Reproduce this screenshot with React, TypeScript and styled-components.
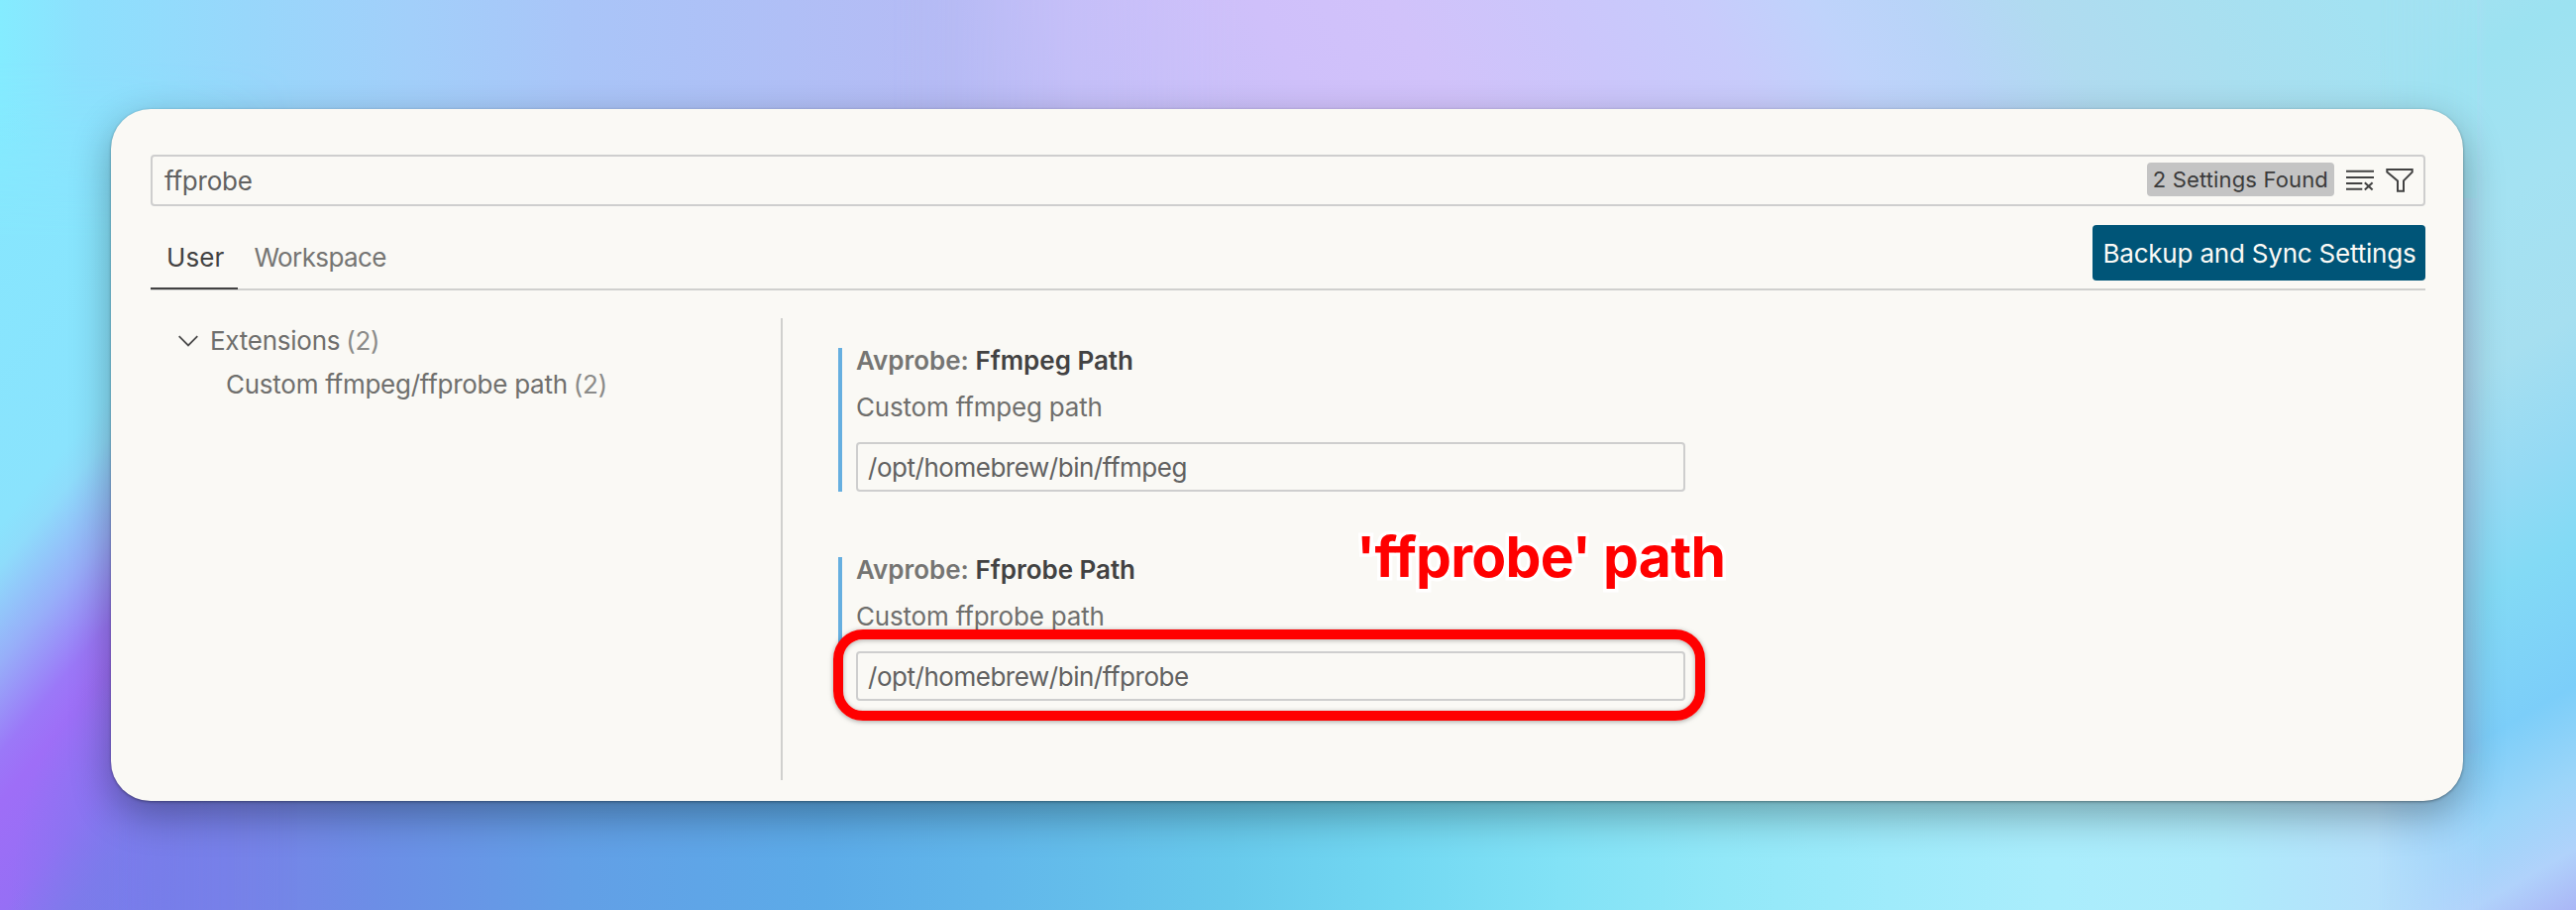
import React from "react";
import styled, { createGlobalStyle } from "styled-components";

const GlobalStyle = createGlobalStyle`
  *, *::before, *::after { box-sizing: border-box; }
  body { margin: 0; }
`;

const Desktop = styled.div`
  position: relative;
  display: flex;
  align-items: flex-start;
  width: 2600px;
  height: 918px;
  padding: 110px 114px 110px 112px;
  overflow: hidden;
  font-family: Inter, "Liberation Sans", sans-serif;
  font-size: 26px;
  line-height: 32px;
  background: linear-gradient(90deg, #84ecff 0, #8de0fd 83px, #98d7fb 249px, #a2cffa 414px,
    #a9c5f8 580px, #b0bff6 796px, #b6bbf5 962px, #c4bff8 1078px, #cfc0fa 1293px, #d1c2fa 1426px);
`;

const Wallpaper = styled.div`
  position: absolute;
  inset: 0;
`;

const TopGlow = styled.div`
  position: absolute;
  top: 0;
  right: 100px;
  width: 1600px;
  height: 200px;
  background: linear-gradient(60deg, #b8bbf5 8%, #c4bff8 15%, #cfc0fa 28%, #d1c2fa 36%, #cbc6fb 46%, #c8cbfb 54%,
    #bfd3fb 61%, #b8d4f8 67%, #b0dbf0 74%, #a9dff0 83%, #a3e2f2 93%);
  mask-image: linear-gradient(90deg, transparent 0, #000 350px);
`;

const BottomGlow = styled.div`
  position: absolute;
  bottom: 0;
  left: 0;
  right: 0;
  height: 158px;
  background: linear-gradient(90deg, #9b70f6 0, #7f7de9 166px, #6c8ee6 380px, #629fe6 580px, #5cabe8 830px,
    #61b6ea 995px, #68caec 1243px, #72d8f2 1410px, #82e2f6 1575px, #92e8f8 1741px, #9febfb 1907px,
    #aaedfc 2073px, #aeebfb 2238px, #b5e0fb 2404px, #b8d8fc 2490px, #abb8f6 2600px);
`;

const LeftGlow = styled.div`
  position: absolute;
  top: 0;
  left: 0;
  width: 400px;
  height: 918px;
  background:
    radial-gradient(ellipse 250px 320px at 260px 918px, #737eea 0%, #737eea 30%, rgba(115, 126, 234, 0) 100%),
    linear-gradient(130deg, #84e8fe 0%, #8ae3fd 38%, #8edcfb 41%, #97aef9 48%, #9b78f8 54.5%,
    #9e6ef7 58%, #966ff5 66%, #8478ec 72%, #7c7de9 80%);
  mask-image: linear-gradient(90deg, #000 110px, transparent 300px), linear-gradient(180deg, transparent 60px, #000 240px);
  mask-composite: intersect;
`;

const RightGlow = styled.div`
  position: absolute;
  top: 0;
  right: 0;
  width: 200px;
  height: 918px;
  background: linear-gradient(150deg, #a4e1f1 0%, #9ce2f1 11%, #a4e2f2 26%, #a6dff0 42%, #95daf4 54%, #83daf5 64%,
    #7ccef9 78%, #9cd5f9 87%, #b0d2fb 94%, #aab6f6 100%);
  mask-image: linear-gradient(90deg, transparent 0, #000 110px);
`;

const Card = styled.main`
  position: relative;
  width: 2374px;
  height: 698px;
  padding: 46px 38px 21px 40px;
  border-radius: 40px;
  background: #faf9f5;
  box-shadow: 0 1px 3px rgba(0, 0, 0, 0.35), 0 14px 40px rgba(0, 0, 0, 0.32);
`;

const SearchBar = styled.div`
  display: flex;
  align-items: center;
  height: 52px;
  padding: 0 7px 0 12px;
  border: 2px solid #cecece;
  border-radius: 4px;
  color: #616161;
`;

const Query = styled.span`
  flex: 1;
  padding-top: 1px;
  letter-spacing: -0.2px;
`;

const CountBadge = styled.span`
  height: 34px;
  margin: -2px 11px 0 0;
  padding: 0 6px;
  border-radius: 4px;
  background: #c4c4c4;
  color: #3b3b3b;
  font-size: 22px;
  line-height: 34px;
  letter-spacing: 0.15px;
`;

const ToolIcon = styled.svg`
  display: block;
  flex: none;
  width: 32px;
  height: 32px;
  margin-left: 8px;
  fill: none;
  stroke: #424242;
  stroke-width: 2;

  &:first-of-type { margin-left: 0; }
`;

const TabBar = styled.div`
  display: flex;
  align-items: flex-end;
  height: 85px;
  border-bottom: 2px solid #d0d0ce;
`;

const Tab = styled.div<{ $active?: boolean }>`
  height: 52px;
  margin-bottom: ${(p) => (p.$active ? "-1px" : "0")};
  padding: ${(p) => (p.$active ? "4px 14px 0 16px" : "5px 16px 0")};
  border-bottom: 2px solid ${(p) => (p.$active ? "#424242" : "transparent")};
  color: ${(p) => (p.$active ? "#424242" : "#757573")};
  letter-spacing: ${(p) => (p.$active ? "0.1px" : "-0.6px")};
`;

const SyncButton = styled.button`
  height: 56px;
  width: 336px;
  margin: 0 0 8px auto;
  padding: 1px 0 0 1px;
  border: 0;
  border-radius: 4px;
  background: #005578;
  color: #fbfaf6;
  font: inherit;
  letter-spacing: -0.2px;
  white-space: nowrap;
`;

const Body = styled.div`
  display: flex;
  padding-top: 28px;
`;

const Tree = styled.nav`
  width: 638px;
  height: 466px;
  padding-top: 1px;
  border-right: 2px solid #d0d0ce;
  color: #6f6f6d;
  letter-spacing: -0.26px;
`;

const TreeRow = styled.div<{ $depth: number }>`
  display: flex;
  align-items: center;
  gap: 6px;
  height: 44px;
  padding-left: ${(p) => (p.$depth ? 76 : 28)}px;
  white-space: nowrap;
`;

const Chevron = styled.svg`
  width: 20px;
  height: 12px;
  margin-right: 6px;
  fill: none;
  stroke: #4c4c4c;
  stroke-width: 1.8;
`;

const Count = styled.span`
  color: #8b8b89;
`;

const SettingList = styled.section`
  display: flex;
  flex-direction: column;
  gap: 66px;
  padding: 30px 0 0 56px;
`;

const Setting = styled.article`
  position: relative;
  height: 145px;
  padding-left: 14px;
  border-left: 4px solid #66afe0;
`;

const SettingTitle = styled.h3`
  margin: 0;
  padding-top: 0;
  font-size: 26px;
  font-weight: 600;
  line-height: 25px;
  color: #424242;
  letter-spacing: -0.03px;
`;

const Category = styled.span`
  color: #757573;
`;

const Description = styled.p`
  margin: 19px 0 0;
  line-height: 32px;
  color: #6f6f6d;
  letter-spacing: -0.18px;
`;

const PathInput = styled.div`
  width: 837px;
  height: 50px;
  margin-top: 19px;
  padding-left: 10px;
  border: 2px solid #cecece;
  border-radius: 4px;
  line-height: 47px;
  color: #616161;
  letter-spacing: -0.47px;
`;

const Highlight = styled.div`
  position: absolute;
  left: -9px;
  top: 73px;
  width: 880px;
  height: 92px;
  border: 10px solid #ff0000;
  border-radius: 30px;
  box-shadow: 0 1px 5px rgba(0, 0, 0, 0.35), inset 0 1px 5px rgba(0, 0, 0, 0.3);
`;

const Callout = styled.div`
  position: absolute;
  left: 519px;
  top: -35px;
  font-size: 57px;
  font-weight: 700;
  line-height: 70px;
  letter-spacing: -0.75px;
  white-space: nowrap;
  color: #ff0000;
  -webkit-text-stroke: 7px #ffffff;
  paint-order: stroke fill;
`;

export default function App() {
  return (
    <Desktop>
      <GlobalStyle />
      <Wallpaper>
        <TopGlow />
        <BottomGlow />
        <LeftGlow />
        <RightGlow />
      </Wallpaper>
      <Card>
        <SearchBar>
          <Query>ffprobe</Query>
          <CountBadge>2 Settings Found</CountBadge>
          <ToolIcon viewBox="0 0 32 32">
            <path d="M1 6.7h28M1 13h28M1 19h16.3M1 24.7h16.3M19.8 18.2l7.8 7.4M27.6 18.2l-7.8 7.4" />
          </ToolIcon>
          <ToolIcon viewBox="0 0 32 32">
            <path d="M2.3 5h25.4v2.6L19 16.4v10.3h-6V16.4L2.3 7.6z" />
          </ToolIcon>
        </SearchBar>
        <TabBar>
          <Tab $active>User</Tab>
          <Tab>Workspace</Tab>
          <SyncButton>Backup and Sync Settings</SyncButton>
        </TabBar>
        <Body>
          <Tree>
            <TreeRow $depth={0}>
              <Chevron viewBox="0 0 20 12">
                <path d="M.7 1.2L10 10.5l9.3-9.3" />
              </Chevron>
              Extensions <Count>(2)</Count>
            </TreeRow>
            <TreeRow $depth={1}>
              Custom ffmpeg/ffprobe path <Count>(2)</Count>
            </TreeRow>
          </Tree>
          <SettingList>
            <Setting>
              <SettingTitle><Category>Avprobe:</Category> Ffmpeg Path</SettingTitle>
              <Description>Custom ffmpeg path</Description>
              <PathInput>/opt/homebrew/bin/ffmpeg</PathInput>
            </Setting>
            <Setting>
              <SettingTitle><Category>Avprobe:</Category> Ffprobe Path</SettingTitle>
              <Description>Custom ffprobe path</Description>
              <PathInput>/opt/homebrew/bin/ffprobe</PathInput>
              <Highlight />
              <Callout>'ffprobe' path</Callout>
            </Setting>
          </SettingList>
        </Body>
      </Card>
    </Desktop>
  );
}
